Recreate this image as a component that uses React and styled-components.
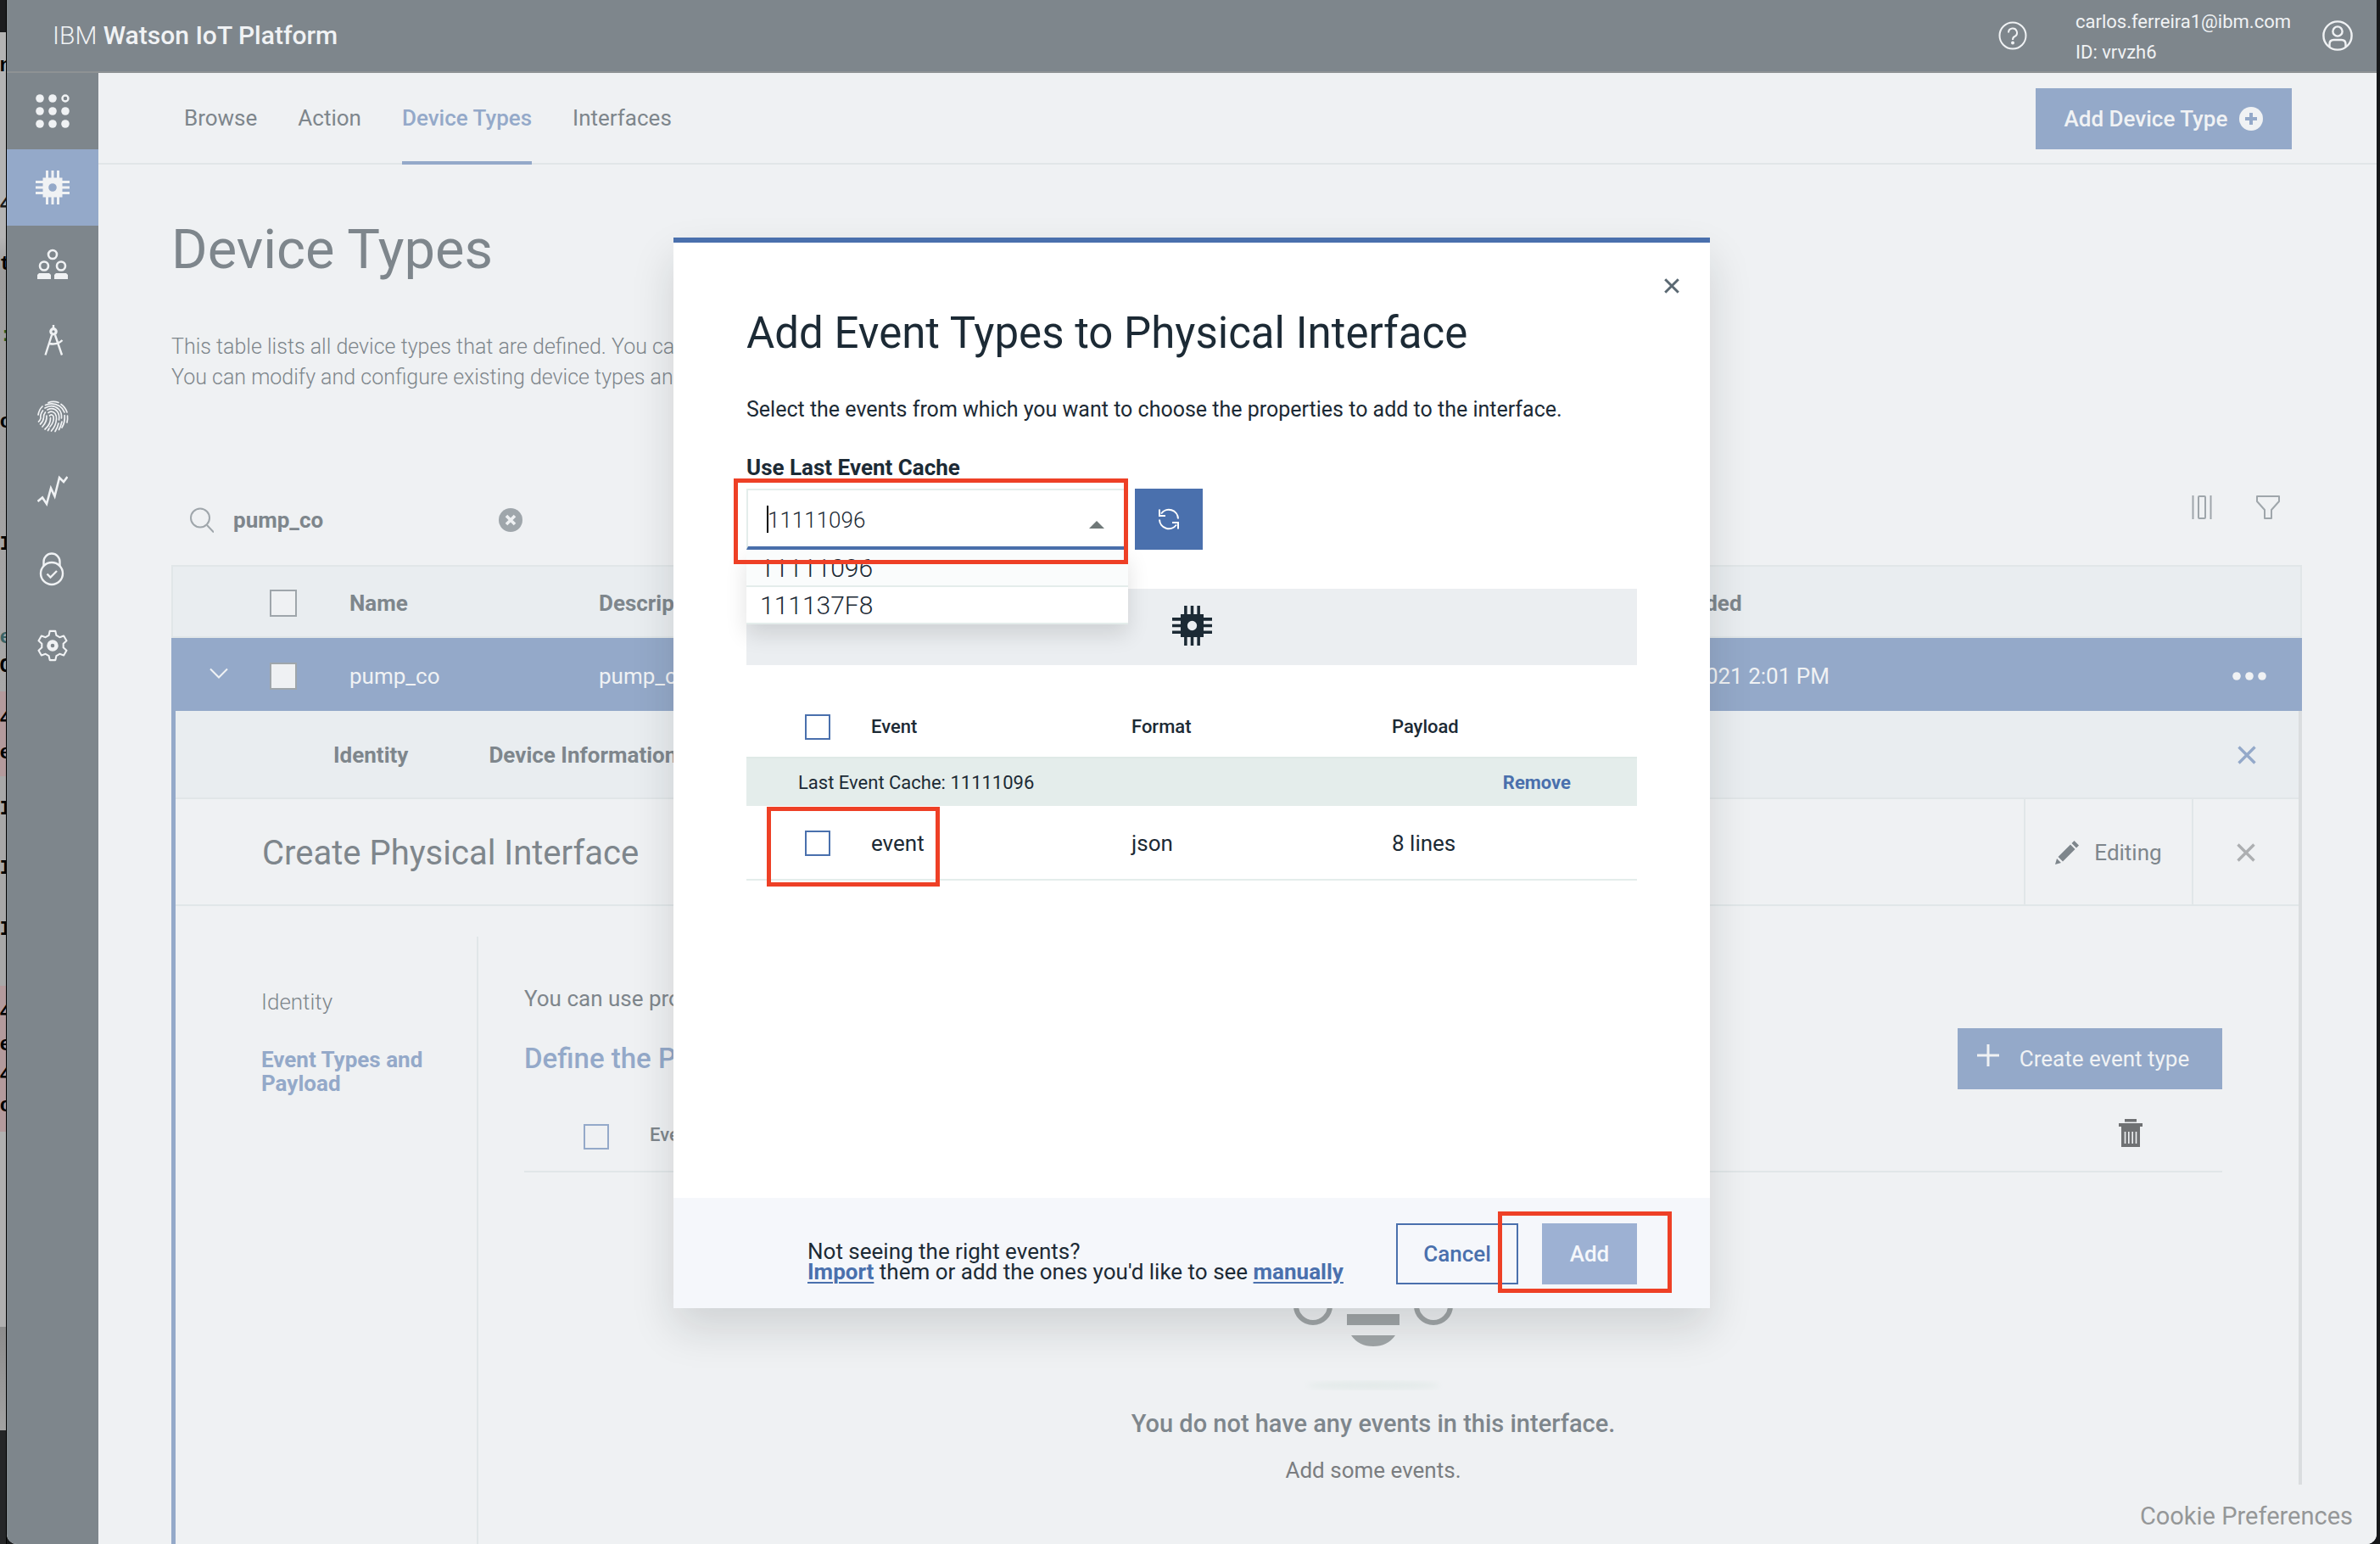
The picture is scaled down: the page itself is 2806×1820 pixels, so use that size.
import React from "react";
import styled, { createGlobalStyle } from "styled-components";

const sans = `Roboto, "Liberation Sans", sans-serif`;
const c = {
  slate: "#7e868c",
  muted: "#9fa6ab",
  page: "#eff1f3",
  band: "#e9edf0",
  line: "#e1e6e8",
  blueSoft: "#94a9c9",
  blue: "#4a70ad",
  ink: "#1c2a35",
  pale: "#f0f2f4",
  mint: "#e4edeb",
  red: "#ee4026",
};

const Global = createGlobalStyle`
  *, *::before, *::after { box-sizing: border-box; }
  body { margin: 0; background: #16181a; font-family: ${sans}; font-size: 26px; line-height: 36px; }
  h1, h2, h3, p, ul { margin: 0; padding: 0; font-weight: 400; }
  ul { list-style: none; }
  button, input { font: inherit; color: inherit; margin: 0; }
  button { border: 0; background: none; padding: 0; cursor: pointer; }
  a { color: inherit; text-decoration: none; }
  svg { display: block; flex: none; }
  table { border-collapse: collapse; width: 100%; table-layout: fixed; }
  th, td { padding: 0; text-align: left; }
`;

const Desktop = styled.div`
  display: flex;
  height: 100vh;
  overflow: hidden;
  padding-right: 4px;
  background: #16181a;
`;
const Backdrop = styled.div`
  position: relative;
  width: 8px;
  flex: none;
  overflow: hidden;
  border-right: 1px solid #000;
  background: linear-gradient(#1b1c1e 0 38px, #b4b4b4 38px 280px, #9c9c9c 320px, #a8a8a8 815px, #b39a9c 815px 915px,
    #a8a8a8 915px 1162px, #b39a9c 1162px 1334px, #b0b0b0 1334px 1564px, #8c8c8c 1564px, #a2a2a2 1686px, #252628 1686px);
`;
const Scrap = styled.span`
  position: absolute;
  right: -7px;
  font: bold 24px/24px "Liberation Mono", monospace;
  color: ${(p) => p.$tone || "#000"};
`;
const Window = styled.div`
  position: relative;
  flex: 1;
  min-width: 0;
  display: flex;
  flex-direction: column;
  overflow: hidden;
  border-radius: 0 0 12px 12px;
  background: ${c.page};
`;

const Header = styled.header`
  display: flex;
  align-items: center;
  height: 86px;
  flex: none;
  padding: 0 28px 0 54px;
  border-bottom: 2px solid #8e9294;
  background: ${c.slate};
  color: ${c.pale};
`;
const Brand = styled.div`
  margin-right: auto;
  font-size: 30px;
  font-weight: 300;
  strong { font-weight: 500; }
`;
const Account = styled.div`
  margin: 4px 37px 0 57px;
  font-size: 22px;
`;
const IconButton = styled.button`
  display: flex;
  align-items: center;
  justify-content: center;
  color: ${(p) => p.$color || "inherit"};
`;

const Body = styled.div`
  flex: 1;
  min-height: 0;
  display: flex;
`;
const Sidebar = styled.nav`
  width: 108px;
  flex: none;
  background: ${c.slate};
  color: ${c.pale};
`;
const SideLink = styled.a`
  display: flex;
  align-items: center;
  justify-content: center;
  height: 90px;
  background: ${(p) => (p.$active ? c.blueSoft : "none")};
`;
const Main = styled.main`
  flex: 1;
  min-width: 0;
  display: flex;
  flex-direction: column;
`;
const TabBar = styled.div`
  display: flex;
  justify-content: space-between;
  align-items: flex-start;
  height: 108px;
  flex: none;
  padding: 0 100px 0 101px;
  border-bottom: 2px solid ${c.line};
  > button { margin-top: 18px; }
`;
const Tabs = styled.nav`
  display: flex;
  gap: 48px;
  height: 108px;
`;
const Tab = styled.a`
  padding-top: 35px;
  color: ${(p) => (p.$active ? c.blueSoft : c.slate)};
  font-weight: ${(p) => (p.$active ? 500 : 400)};
  border-bottom: 4px solid ${(p) => (p.$active ? c.blueSoft : "transparent")};
`;
const SoftButton = styled.button`
  display: flex;
  align-items: center;
  justify-content: center;
  gap: ${(p) => p.$gap};
  width: ${(p) => p.$width};
  height: 72px;
  padding-right: ${(p) => p.$end || "0"};
  background: ${c.blueSoft};
  color: ${c.pale};
  font-weight: ${(p) => p.$weight || 400};
`;
const Content = styled.div`
  flex: 1;
  min-height: 0;
  overflow: hidden;
  display: flex;
  flex-direction: column;
  padding: 60px 88px 0 86px;
`;
const PageTitle = styled.h1`
  font-size: 65px;
  line-height: 80px;
  color: ${c.slate};
`;
const Intro = styled.p`
  margin-top: 57px;
  font-size: 25px;
  font-weight: 300;
  color: ${c.slate};
`;
const Toolbar = styled.div`
  display: flex;
  align-items: center;
  height: 64px;
  margin: 118px 0 21px;
  padding: 0 26px 0 22px;
  flex: none;
  color: ${c.muted};
`;
const SearchInput = styled.input`
  width: 313px;
  margin-left: 23px;
  border: 0;
  padding: 0;
  outline: 0;
  background: none;
  color: ${c.slate};
  font-weight: 700;
`;
const ToolIcons = styled.div`
  display: flex;
  gap: 52px;
  margin-left: auto;
  align-self: flex-start;
`;
const Check = styled.input.attrs({ type: "checkbox" })`
  appearance: none;
  display: block;
  width: ${(p) => p.$size || 30}px;
  height: ${(p) => p.$size || 30}px;
  border: 2px solid ${(p) => p.$color || c.blue};
  background: ${(p) => p.$fill || "transparent"};
`;
const DeviceTable = styled.table`
  flex: none;
  color: ${c.slate};
  thead tr { height: 86px; background: ${c.band}; box-shadow: inset 0 0 0 2px ${c.line}; }
  th { padding-top: 3px; font-weight: 700; }
  tbody tr { height: 86px; background: ${c.blueSoft}; color: ${c.pale}; }
  td { padding-top: 3px; }
`;
const RightCell = styled.td`
  button { margin-left: 46px; }
`;
const ExpandCell = styled.td`
  button { margin: 0 0 6px 45px; }
`;
const Panel = styled.section`
  flex: 1;
  min-height: 0;
  display: flex;
  flex-direction: column;
  border-left: 5px solid ${c.blueSoft};
  border-right: 4px solid #dadddf;
  color: ${c.slate};
`;
const PanelTabs = styled.nav`
  display: flex;
  align-items: center;
  gap: 95px;
  height: 104px;
  flex: none;
  padding: 2px 50px 0 186px;
  background: ${c.band};
  border-bottom: 2px solid ${c.line};
  font-weight: 700;
  button { margin-left: auto; }
`;
const PanelHead = styled.div`
  display: flex;
  height: 126px;
  flex: none;
  border-bottom: 2px solid ${c.line};
`;
const PanelTitle = styled.h2`
  flex: 1;
  padding: 40px 0 0 102px;
  font-size: 40px;
  line-height: 48px;
`;
const HeadCell = styled.div`
  display: flex;
  align-items: center;
  justify-content: center;
  gap: 18px;
  width: ${(p) => p.$width};
  padding-top: 2px;
  border-left: 2px solid ${c.line};
`;
const PanelBody = styled.div`
  flex: 1;
  min-height: 0;
  display: flex;
  padding: 36px 90px 0 101px;
`;
const Steps = styled.nav`
  display: flex;
  flex-direction: column;
  gap: 40px;
  width: 256px;
  flex: none;
  padding: 63px 50px 0 0;
  border-right: 2px solid ${c.line};
  line-height: 28px;
`;
const Step = styled.a`
  font-weight: ${(p) => (p.$active ? 700 : 300)};
  color: ${(p) => (p.$active ? c.blueSoft : c.slate)};
`;
const Pane = styled.div`
  flex: 1;
  min-width: 0;
  padding: 55px 0 0 54px;
`;
const PaneHead = styled.div`
  display: flex;
  align-items: center;
  justify-content: space-between;
  height: 72px;
  margin-top: 17px;
`;
const PaneTitle = styled.h3`
  font-size: 33px;
  font-weight: 500;
  color: ${c.blueSoft};
`;
const EventHead = styled.div`
  display: flex;
  align-items: center;
  gap: 48px;
  height: 98px;
  padding: 16px 94px 0 70px;
  border-bottom: 2px solid ${c.line};
  font-size: 22px;
  font-weight: 500;
  span { padding-bottom: 4px; }
  button { margin: 0 0 8px auto; }
`;
const Empty = styled.div`
  display: flex;
  flex-direction: column;
  align-items: center;
  padding-top: 98px;
`;
const EmptyTitle = styled.p`
  font-size: 29px;
  font-weight: 500;
`;
const EmptyNote = styled.p`
  margin-top: 19px;
  color: #7a7d80;
`;
const Cookie = styled.button`
  position: absolute;
  right: 0;
  bottom: 0;
  height: 70px;
  padding: 4px 28px 0;
  background: ${c.page};
  color: #959798;
  font-size: 29px;
`;

const Overlay = styled.div`
  position: absolute;
  inset: 0;
  display: flex;
  justify-content: center;
  align-items: flex-start;
  padding-top: 280px;
`;
const Modal = styled.div`
  position: relative;
  width: 1222px;
  border-top: 6px solid ${c.blue};
  background: #fff;
  color: ${c.ink};
  box-shadow: 0 24px 48px rgba(20, 30, 30, 0.14);
`;
const ModalClose = styled(IconButton)`
  position: absolute;
  top: 31px;
  right: 25px;
  width: 40px;
  height: 40px;
  color: #5a6872;
`;
const ModalBody = styled.div`
  min-height: 1126px;
  padding: 75px 86px 0;
`;
const ModalTitle = styled.h2`
  margin-bottom: 40px;
  font-size: 51px;
  line-height: 64px;
`;
const Lead = styled.p`
  font-size: 25px;
`;
const FieldLabel = styled.label`
  display: block;
  margin: 32px 0 7px;
  font-weight: 700;
`;
const FieldRow = styled.div`
  display: flex;
  gap: 8px;
`;
const Combo = styled.div`
  position: relative;
  width: 450px;
  svg { position: absolute; right: 28px; top: 38px; }
`;
const ComboInput = styled.input`
  width: 100%;
  height: 72px;
  padding: 4px 60px 0 23px;
  border: 2px solid ${c.mint};
  border-bottom: 4px solid ${c.blue};
  border-radius: 0;
  outline: 0;
  background: #fff;
  font-weight: 300;
`;
const Caret = styled.span`
  position: absolute;
  left: 24px;
  top: 20px;
  width: 2px;
  height: 32px;
  background: #000;
`;
const Options = styled.ul`
  position: absolute;
  top: 72px;
  left: 0;
  right: 0;
  z-index: 1;
  background: #fff;
  box-shadow: 0 12px 24px rgba(0, 0, 0, 0.12);
`;
const Option = styled.li`
  height: 44px;
  padding: 4px 16px 0;
  border-bottom: 2px solid ${c.mint};
  background: ${(p) => (p.$current ? "#fafcfc" : "#fff")};
  font-size: 30px;
  font-weight: 300;
`;
const Refresh = styled(IconButton)`
  width: 80px;
  height: 72px;
  background: ${c.blue};
  color: #fff;
`;
const Highlight = styled.span`
  position: absolute;
  inset: ${(p) => p.$inset};
  z-index: 2;
  border: 5px solid ${c.red};
  pointer-events: none;
`;
const DeviceBand = styled.div`
  display: flex;
  align-items: center;
  justify-content: center;
  height: 90px;
  margin: 46px 0 38px;
  padding-bottom: 4px;
  background: #ebeef1;
`;
const EventTable = styled.table`
  thead tr { height: 70px; font-size: 22px; }
  th { font-weight: 500; }
  tbody tr:last-child { height: 87px; border-bottom: 2px solid ${c.mint}; }
  tbody tr:last-child td { padding-top: 2px; }
  input { margin-left: 69px; }
`;
const PickCell = styled.td`
  position: relative;
`;
const GroupBar = styled.div`
  display: flex;
  align-items: center;
  justify-content: space-between;
  height: 58px;
  padding: 1px 78px 0 61px;
  border-top: 2px solid #dfe9e7;
  background: ${c.mint};
  font-size: 22px;
  button { color: ${c.blue}; font-weight: 700; }
`;
const ModalFooter = styled.div`
  display: flex;
  align-items: center;
  gap: 28px;
  height: 130px;
  padding: 2px 86px 0 158px;
  background: #f5f7fb;
`;
const FooterNote = styled.p`
  margin-right: auto;
  padding-top: 18px;
  line-height: 24px;
  a { color: ${c.blue}; font-weight: 700; text-decoration: underline; text-decoration-thickness: 2px; text-underline-offset: 3px; }
`;
const Action = styled.button`
  width: ${(p) => (p.$primary ? "112px" : "144px")};
  height: 72px;
  border: ${(p) => (p.$primary ? "0" : `2px solid ${c.blue}`)};
  background: ${(p) => (p.$primary ? "#9db1d3" : "transparent")};
  color: ${(p) => (p.$primary ? "#f5f7fb" : c.blue)};
  font-weight: 500;
`;
const ActionWrap = styled.div`
  position: relative;
`;

const ChipIcon = ({ size }) => (
  <svg width={size} height={size} viewBox="0 0 40 40" fill="currentColor">
    <path d="M12 0h3v9h-3zM18.500 0h3v9h-3zM25 0h3v9h-3zM12 31h3v9h-3zM18.500 31h3v9h-3zM25 31h3v9h-3zM0 12h9v3H0zM0 18.500h9v3H0zM0 25h9v3H0zM31 12h9v3h-9zM31 18.500h9v3h-9zM31 25h9v3h-9z" />
    <path fillRule="evenodd" d="M8.500 8.500h23v23h-23zM20 15.200a4.800 4.800 0 1 0 0 9.600a4.800 4.800 0 1 0 0-9.600z" />
  </svg>
);
const AppsIcon = () => (
  <svg width="40" height="40" viewBox="0 0 40 40" fill="currentColor">
    {[5, 20, 35].map((y) => [5, 20, 35].map((x) =>
      x === 35 && y === 5
        ? <circle key={`${x}${y}`} cx={x} cy={y} r="3.500" fill="none" stroke="currentColor" strokeWidth="2.400" />
        : <circle key={`${x}${y}`} cx={x} cy={y} r="4.800" />))}
  </svg>
);
const MembersIcon = () => (
  <svg width="36" height="36" viewBox="0 0 36 36">
    <g fill="none" stroke="currentColor" strokeWidth="2.600">
      <circle cx="18" cy="7" r="5" /><circle cx="8" cy="20.500" r="5" /><circle cx="28" cy="20.500" r="5" />
    </g>
    <path fill="currentColor" d="M2 29h12l2 2v5H0v-5zM22 29h12l2 2v5H20v-5z" />
  </svg>
);
const CompassIcon = () => (
  <svg width="36" height="36" viewBox="0 0 36 36" fill="none" stroke="currentColor" strokeWidth="2.400">
    <path d="M19 0v4M17 12L9.500 35.500M21 12l8 23.500M14 22c4 .8 11 .6 15.500-4" />
    <circle cx="19" cy="7.800" r="3.200" strokeWidth="3.200" />
  </svg>
);
const FingerprintIcon = () => (
  <svg width="38" height="38" viewBox="0 0 38 38" fill="none" stroke="currentColor" strokeWidth="1.700" strokeLinecap="round">
    <path d="M14 2.500Q20 .2 26 2.500M29 4.500Q34 8 36 14M10.500 5.500Q19 1.800 27 6.500Q31 9 33 14M7 7Q3 11 2 17" />
    <path d="M10 9Q19 3.800 26 10Q30 14 29.500 21M7.500 12Q4 17 5 21Q4 24 2.500 25M13 11Q20 7.500 24.500 13Q27.500 17 26.500 23" />
    <path d="M10.500 14Q8 17 8.500 20Q8 25 4.500 28M14 14.500Q18.500 11.500 22 15.500Q24 18.500 23.500 22Q23 30 17.500 36" />
    <path d="M12 18Q12.500 25 7 31M15.500 18Q18.500 15.500 20 19Q21.200 25 16 31M16.500 20.500Q17 28 10 34M15 33L13.500 35.500" />
    <path d="M36.500 18Q37 22 36 26M33.200 17.500Q33.800 26 30 32M30 25Q28.500 31 26.500 34.500M26 27Q25 32 22 36.500" />
  </svg>
);
const ChartIcon = () => (
  <svg width="36" height="42" viewBox="0 0 36 42" fill="none" stroke="currentColor" strokeWidth="2.600">
    <path d="M.5 31L6 26.500L11 34L16 15.500L20.500 25L26 3L31 8L35.500 2" />
  </svg>
);
const LockIcon = () => (
  <svg width="40" height="40" viewBox="0 0 40 40" fill="none" stroke="currentColor" strokeWidth="2.400">
    <circle cx="19" cy="25" r="13" /><path d="M9.500 16v-5a9.500 9.500 0 0 1 19 0v5M13.500 25.500l4 4L25 22" />
  </svg>
);
const gearPoints = [0, 60, 120, 180, 240, 300]
  .flatMap((a) => [[-20, 12.2], [-11, 16.500], [11, 16.500], [20, 12.2]].map(([d, r]) => {
    const t = ((a + d - 90) * Math.PI) / 180;
    return `${18 + r * Math.cos(t)},${18 + r * Math.sin(t)}`;
  })).join(" ");
const GearIcon = () => (
  <svg width="38" height="38" viewBox="0 0 36 36" fill="none" stroke="currentColor" strokeWidth="2" strokeLinejoin="round">
    <polygon points={gearPoints} /><circle cx="18" cy="18" r="4.300" strokeWidth="4.200" />
  </svg>
);
const CloseIcon = ({ size, width = 3.4 }) => (
  <svg width={size} height={size} viewBox="0 0 22 22" stroke="currentColor" strokeWidth={width}>
    <path d="M1.500 1.500l19 19M20.500 1.500l-19 19" />
  </svg>
);

const sideLinks = [
  ["Applications", <AppsIcon />],
  ["Devices", <ChipIcon size={40} />],
  ["Members", <MembersIcon />],
  ["Design", <CompassIcon />],
  ["Access", <FingerprintIcon />],
  ["Usage", <ChartIcon />],
  ["Security", <LockIcon />],
  ["Settings", <GearIcon />],
];
const scraps = [["n", 66], ["4", 230, "#1b1b1b"], ["t", 300], [":", 384, "#2c5c1e"], ["c", 486], ["I", 630], ["e", 740, "#3c6466"], ["C", 774],
  ["4", 836], ["e", 876], ["I", 942], ["I", 1012], ["I", 1084], ["4", 1182], ["e", 1220], ["4", 1256], ["c", 1292]];

export default function App() {
  return (
    <Desktop>
      <Global />
      <Backdrop aria-hidden="true">
        {scraps.map(([ch, top, tone]) => <Scrap key={top} $tone={tone} style={{ top }}>{ch}</Scrap>)}
      </Backdrop>
      <Window>
        <Header>
          <Brand>IBM <strong>Watson IoT Platform</strong></Brand>
          <IconButton aria-label="Help">
            <svg width="34" height="34" viewBox="0 0 34 34" fill="none" stroke="currentColor" strokeWidth="2">
              <circle cx="17" cy="17" r="15.500" /><path d="M12 13.500a5 5 0 1 1 7.200 4.500Q17 19 17 22" />
              <circle cx="17" cy="25.500" r="1" />
            </svg>
          </IconButton>
          <Account>carlos.ferreira1@ibm.com<br />ID: vrvzh6</Account>
          <IconButton aria-label="Profile">
            <svg width="36" height="36" viewBox="0 0 36 36" fill="none" stroke="currentColor" strokeWidth="2.400">
              <circle cx="18" cy="18" r="16.600" /><circle cx="18" cy="13" r="5.600" />
              <path d="M8.500 31v-3q0-5 5-5h9q5 0 5 5v3" />
            </svg>
          </IconButton>
        </Header>
        <Body>
          <Sidebar>
            {sideLinks.map(([label, icon]) => (
              <SideLink key={label} href="#" aria-label={label} $active={label === "Devices"}>{icon}</SideLink>
            ))}
          </Sidebar>
          <Main>
            <TabBar>
              <Tabs>
                {["Browse", "Action", "Device Types", "Interfaces"].map((t) => (
                  <Tab key={t} href="#" $active={t === "Device Types"}>{t}</Tab>
                ))}
              </Tabs>
              <SoftButton $width="302px" $gap="14px" $weight={500}>
                Add Device Type
                <svg width="28" height="28" viewBox="0 0 28 28">
                  <circle cx="14" cy="14" r="14" fill="currentColor" />
                  <path d="M14 7v14M7 14h14" stroke={c.blueSoft} strokeWidth="4" />
                </svg>
              </SoftButton>
            </TabBar>
            <Content>
              <PageTitle>Device Types</PageTitle>
              <Intro>
                This table lists all device types that are defined. You can<br />
                You can modify and configure existing device types and
              </Intro>
              <Toolbar>
                <svg width="28" height="30" viewBox="0 0 28 30" fill="none" stroke="currentColor" strokeWidth="2">
                  <circle cx="12" cy="12.500" r="11" /><path d="M20 21l8 8.500" />
                </svg>
                <SearchInput aria-label="Search" defaultValue="pump_co" />
                <IconButton aria-label="Clear search">
                  <svg width="28" height="28" viewBox="0 0 28 28">
                    <circle cx="14" cy="14" r="14" fill="currentColor" />
                    <path d="M9 9l10 10M19 9L9 19" stroke={c.page} strokeWidth="3.600" />
                  </svg>
                </IconButton>
                <ToolIcons>
                  <IconButton aria-label="Columns">
                    <svg width="24" height="34" viewBox="0 0 24 34" fill="none" stroke="currentColor" strokeWidth="2">
                      <path d="M1.500 3v28M22.500 3v28" /><rect x="8" y="4" width="8" height="26" rx="1" />
                    </svg>
                  </IconButton>
                  <IconButton aria-label="Filter">
                    <svg width="28" height="34" viewBox="0 0 28 34" fill="none" stroke="currentColor" strokeWidth="2" strokeLinejoin="round">
                      <path d="M1 4h26v6l-9 10v10h-8V20L1 10z" />
                    </svg>
                  </IconButton>
                </ToolIcons>
              </Toolbar>
              <DeviceTable>
                <colgroup>
                  <col style={{ width: 116 }} /><col style={{ width: 94 }} /><col style={{ width: 294 }} />
                  <col /><col style={{ width: 668 }} /><col style={{ width: 128 }} />
                </colgroup>
                <thead>
                  <tr>
                    <th />
                    <th><Check aria-label="Select all device types" $size={32} $color={c.muted} $fill={c.page} /></th>
                    <th>Name</th>
                    <th>Description</th>
                    <th colSpan={2}>Date Added</th>
                  </tr>
                </thead>
                <tbody>
                  <tr>
                    <ExpandCell>
                      <IconButton aria-label="Collapse row">
                        <svg width="22" height="14" viewBox="0 0 22 14" fill="none" stroke="currentColor" strokeWidth="2">
                          <path d="M1 1.500l10 10l10-10" />
                        </svg>
                      </IconButton>
                    </ExpandCell>
                    <td><Check aria-label="Select pump_co" $size={32} $color={c.muted} $fill={c.page} /></td>
                    <td>pump_co</td>
                    <td>pump_co</td>
                    <td>Mar 3, 2021 2:01 PM</td>
                    <RightCell>
                      <IconButton aria-label="More actions">
                        <svg width="40" height="10" viewBox="0 0 40 10" fill="currentColor">
                          <circle cx="5" cy="5" r="4.800" /><circle cx="20" cy="5" r="4.800" /><circle cx="35" cy="5" r="4.800" />
                        </svg>
                      </IconButton>
                    </RightCell>
                  </tr>
                </tbody>
              </DeviceTable>
              <Panel>
                <PanelTabs>
                  <a href="#">Identity</a>
                  <a href="#">Device Information</a>
                  <IconButton aria-label="Close details" $color={c.blueSoft}><CloseIcon size={22} /></IconButton>
                </PanelTabs>
                <PanelHead>
                  <PanelTitle>Create Physical Interface</PanelTitle>
                  <HeadCell $width="198px">
                    <svg width="28" height="28" viewBox="0 0 28 28" fill="currentColor">
                      <path d="M0 28l2-7l5 5zM3.500 19L18 4.500l5.500 5.500L9 24.500zM19.500 3L22.500 0l5.500 5.500L25 8.500z" />
                    </svg>
                    Editing
                  </HeadCell>
                  <HeadCell $width="126px">
                    <IconButton aria-label="Close editor" $color="#adafb1"><CloseIcon size={22} /></IconButton>
                  </HeadCell>
                </PanelHead>
                <PanelBody>
                  <Steps>
                    <Step href="#">Identity</Step>
                    <Step href="#" $active>Event Types and Payload</Step>
                  </Steps>
                  <Pane>
                    <p>You can use properties</p>
                    <PaneHead>
                      <PaneTitle>Define the Payload</PaneTitle>
                      <SoftButton $width="312px" $gap="24px" $end="16px">
                        <svg width="26" height="34" viewBox="0 0 26 34" stroke="currentColor" strokeWidth="3">
                          <path d="M13 0v26M0 13h26" />
                        </svg>
                        Create event type
                      </SoftButton>
                    </PaneHead>
                    <EventHead>
                      <Check aria-label="Select all interface events" $color={c.blueSoft} />
                      <span>Event</span>
                      <IconButton aria-label="Delete" $color="#6f7173">
                        <svg width="28" height="34" viewBox="0 0 28 34" fill="currentColor">
                          <path d="M7 0h14v3.500H7zM0 5h28v4H0zM3 9h22v24H3z" />
                          <path d="M7.500 15v14M11.800 15v14M16.200 15v14M20.500 15v14" stroke={c.page} strokeWidth="1.600" />
                        </svg>
                      </IconButton>
                    </EventHead>
                    <Empty>
                      <svg width="200" height="180" viewBox="0 0 200 180">
                        <defs>
                          <filter id="soft"><feGaussianBlur stdDeviation="3" /></filter>
                        </defs>
                        <g fill="none" stroke="#a1a6a8" strokeWidth="6">
                          <circle cx="29" cy="59" r="20" /><circle cx="171" cy="59" r="20" />
                        </g>
                        <path fill="#a1a6a8" d="M69 69h62v13H69zM74 94h52q-9 13-26 13t-26-13z" />
                        <ellipse cx="100" cy="153" rx="78" ry="5" fill="#e3eae9" filter="url(#soft)" />
                      </svg>
                      <EmptyTitle>You do not have any events in this interface.</EmptyTitle>
                      <EmptyNote>Add some events.</EmptyNote>
                    </Empty>
                  </Pane>
                </PanelBody>
              </Panel>
            </Content>
          </Main>
        </Body>
        <Cookie>Cookie Preferences</Cookie>

        <Overlay>
          <Modal role="dialog" aria-labelledby="dialog-title">
            <ModalClose aria-label="Close dialog"><CloseIcon size={18} width={3.6} /></ModalClose>
            <ModalBody>
              <ModalTitle id="dialog-title">Add Event Types to Physical Interface</ModalTitle>
              <Lead>Select the events from which you want to choose the properties to add to the interface.</Lead>
              <FieldLabel htmlFor="cache">Use Last Event Cache</FieldLabel>
              <FieldRow>
                <Combo>
                  <ComboInput id="cache" role="combobox" aria-expanded="true" aria-controls="cache-options" defaultValue="11111096" />
                  <Caret />
                  <svg width="18" height="9" viewBox="0 0 18 9"><path d="M0 9L9 0l9 9z" fill="#6f7878" /></svg>
                  <Options id="cache-options" role="listbox">
                    <Option role="option" aria-selected="true" $current>11111096</Option>
                    <Option role="option" aria-selected="false">111137F8</Option>
                  </Options>
                  <Highlight $inset="-12px 0 -17px -15px" />
                </Combo>
                <Refresh aria-label="Refresh">
                  <svg width="26" height="26" viewBox="0 0 26 26" fill="none" stroke="currentColor" strokeWidth="2">
                    <path d="M24 12.500A11 11 0 0 0 4 6.500M2 1.500V9h7M2 13.500A11 11 0 0 0 22 19.500M24 24.500V17h-7" />
                  </svg>
                </Refresh>
              </FieldRow>
              <DeviceBand><ChipIcon size={47} /></DeviceBand>
              <EventTable>
                <colgroup>
                  <col style={{ width: 147 }} /><col style={{ width: 307 }} /><col style={{ width: 307 }} /><col />
                </colgroup>
                <thead>
                  <tr>
                    <th><Check aria-label="Select all events" /></th>
                    <th>Event</th><th>Format</th><th>Payload</th>
                  </tr>
                </thead>
                <tbody>
                  <tr>
                    <td colSpan={4}>
                      <GroupBar>Last Event Cache: 11111096<button>Remove</button></GroupBar>
                    </td>
                  </tr>
                  <tr>
                    <PickCell>
                      <Check id="pick-event" />
                      <Highlight $inset="1px -81px -9px 24px" />
                    </PickCell>
                    <td><label htmlFor="pick-event">event</label></td><td>json</td><td>8 lines</td>
                  </tr>
                </tbody>
              </EventTable>
            </ModalBody>
            <ModalFooter>
              <FooterNote>
                Not seeing the right events?<br />
                <a href="#">Import</a> them or add the ones you'd like to see <a href="#">manually</a>
              </FooterNote>
              <Action>Cancel</Action>
              <ActionWrap>
                <Action $primary>Add</Action>
                <Highlight $inset="-14px -41px -10px -52px" />
              </ActionWrap>
            </ModalFooter>
          </Modal>
        </Overlay>
      </Window>
    </Desktop>
  );
}
